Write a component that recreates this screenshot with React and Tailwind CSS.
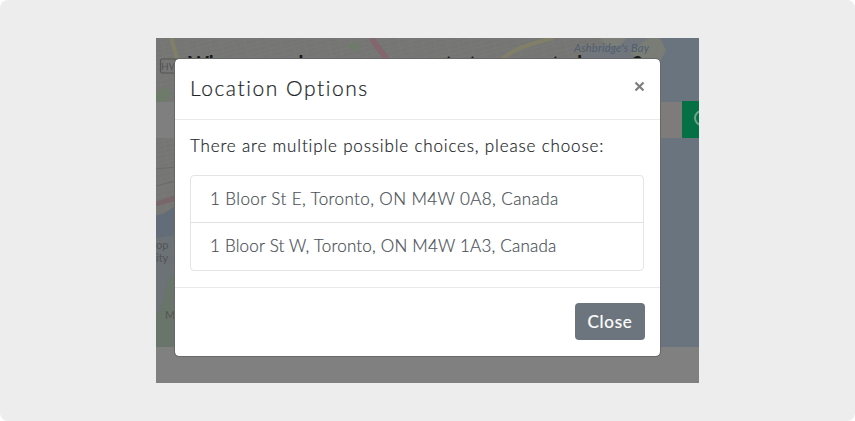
import React from "react";

function MapBackdrop() {
  return (
    <svg className="absolute inset-0" width="543" height="345" viewBox="0 0 543 345">
      <defs>
        <pattern id="streets" width="23" height="9" patternUnits="userSpaceOnUse" patternTransform="rotate(-14)">
          <path d="M0 2H23M0 6H23M5 0V9M16 0V9" stroke="#828380" strokeWidth="1" fill="none" />
        </pattern>
      </defs>
      <rect width="543" height="345" fill="#757674" />
      <rect width="543" height="310" fill="url(#streets)" opacity=".3" />
      <g fill="#6e7b6b">
        <path d="M0 54l9-6 8 7-8 9H0zM192 7l9-3 3 5-6 4-6-3z" />
      </g>
      <path d="M15 0l5 17 2 10" stroke="#827f68" strokeWidth="4" fill="none" />
      <path d="M216 0c4 10 11 13 16 24" stroke="#83666e" strokeWidth="6" fill="none" />
      <path d="M342 24C356 12 366 8 397 0" stroke="#827f68" strokeWidth="4" fill="none" />
      <path d="M416 24l13-9 13-4 9-11h92v310H416z" fill="#70767c" />
      <path d="M492 0h27l-3 14-8 10h-22l-12-9z" fill="#797d76" />
      <path d="M444 0h27l-10 10-13-4z" fill="#7c7e78" />
      <path d="M504 0h39v310h-39V24l6-12z" fill="#6a747e" />
      <path d="M0 177l7-1 12-8v142H0z" fill="#626d79" />
      <path d="M0 200l19-3v113H0z" fill="#6c7276" />
      <path d="M0 278l8-18 4-20 7-2v72H0z" fill="#69746a" />
      <path d="M0 166l19-6" stroke="#79666b" strokeWidth="5" />
      <path d="M0 131l19-2M0 148l19-5" stroke="#6a6b6a" strokeWidth="1" />
      <rect x="0" y="64" width="526" height="36" fill="#7e7b7a" />
      <rect x="0" y="64" width="19" height="36" fill="#7f7f7f" />
      <rect x="526" y="63" width="17" height="37" fill="#047044" />
      <circle cx="546" cy="80" r="7" fill="none" stroke="#6ba58a" strokeWidth="2" />
      <rect y="309" width="543" height="36" fill="#808080" />
      <rect x="4.5" y="21" width="24" height="14" rx="2" fill="none" stroke="#555" strokeWidth="1.2" />
      <g fontFamily="Lato, sans-serif" fontWeight="400" fill="#535455">
        <text x="5" y="32" fontSize="10">HW</text>
        <text x="0" y="211" fontSize="11">op</text>
        <text x="0" y="224" fontSize="11">ity</text>
        <text x="9" y="281" fontSize="11">M</text>
        <text x="418" y="14" fontSize="11" fontStyle="italic" fill="#505e70" textLength="75">Ashbridge's Bay</text>
      </g>
      <text y="32.5" fontFamily="Lato, sans-serif" fontWeight="700" fontSize="20" fill="#171819">
        <tspan x="32">Where</tspan>
        <tspan x="136">do</tspan>
        <tspan x="180">you</tspan>
        <tspan x="252">want</tspan>
        <tspan x="313">to</tspan>
        <tspan x="352">go</tspan>
        <tspan x="396">today</tspan>
        <tspan x="477">?</tspan>
      </text>
    </svg>
  );
}

function Option({ children }) {
  return <li className="flex h-[47px] items-center pb-px pl-[19px] text-[17px] text-[#495057]">{children}</li>;
}

export default function App() {
  return (
    <div className="h-[421px] w-[855px] bg-white font-['Lato','Liberation_Sans',sans-serif] font-light">
      <main className="h-full rounded-[8px] bg-[#ededed] px-[156px] pt-[38px]">
        <div className="relative h-[345px] w-[543px] overflow-hidden pt-[20px] pl-[18px]">
          <MapBackdrop />
          <section className="relative h-[299px] w-[487px] rounded-[5px] border border-[#686868] bg-white bg-clip-padding [-webkit-text-stroke:0.2px]">
            <header className="flex h-[61px] items-center justify-between border-b border-[#e9e9e9] px-[15px]">
              <h1 className="pb-[3px] text-[21px] leading-[22px] tracking-[1.55px] whitespace-nowrap text-[#212529]">Location Options</h1>
              <button aria-label="Dismiss" className="mb-[6px]">
                <svg width="11" height="11" viewBox="0 0 11 11"><path d="M1.5 1.5l8 8m0-8l-8 8" stroke="#7e7e7e" strokeWidth="2.2" /></svg>
              </button>
            </header>
            <div className="h-[168px] border-b border-[#e9e9e9] px-[15px] pt-[14px]">
              <p className="mb-[17px] h-[24px] text-[17px] leading-[24px] tracking-[0.84px] whitespace-nowrap text-[#212529]">There are multiple possible choices, please choose:</p>
              <ul className="mr-px divide-y divide-[#e1e1e1] rounded-[4px] border border-[#e4e4e4]">
                <Option><span className="tracking-[0.41px]">1 Bloor St E, Toronto, ON M4W 0A8, Canada</span></Option>
                <Option><span className="tracking-[0.21px]">1 Bloor St W, Toronto, ON M4W 1A3, Canada</span></Option>
              </ul>
            </div>
            <footer className="flex justify-end pt-[15px] pr-[15px]">
              <button className="h-[37px] w-[70px] rounded-[4px] bg-[#6c757d] text-[17px] font-normal tracking-[0.75px] text-white">Close</button>
            </footer>
          </section>
        </div>
      </main>
    </div>
  );
}
